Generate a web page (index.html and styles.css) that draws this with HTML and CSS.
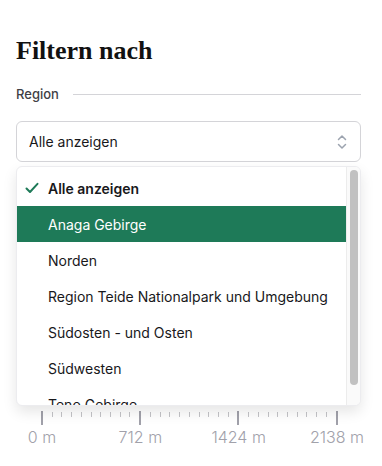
FILE: index.html
```html
<!DOCTYPE html>
<html lang="de">
<head>
<meta charset="utf-8">
<link rel="stylesheet" href="styles.css">
</head>
<body>
<div class="panel">
  <h2 class="title">Filtern nach</h2>
  <div class="section-head">
    <span class="section-label">Region</span>
    <span class="section-rule"></span>
  </div>
  <div class="select-wrap">
    <div class="select">
      <span class="select-value">Alle anzeigen</span>
      <svg class="select-icon" width="10" height="16" viewBox="0 0 10 16" fill="none" stroke="#9ca3af" stroke-width="1.5" stroke-linecap="round" stroke-linejoin="round"><path d="M1.5 5.5 5 2 8.5 5.5"/><path d="M1.5 10.5 5 14 8.5 10.5"/></svg>
    </div>
    <div class="dropdown">
      <ul class="options">
        <li class="option selected">
          <svg class="check" width="14" height="12" viewBox="0 0 14 12" fill="none" stroke="#1e7a58" stroke-width="2" stroke-linecap="round" stroke-linejoin="round"><path d="M1.5 6.5 5 10 12.5 1.8"/></svg>
          Alle anzeigen</li>
        <li class="option active">Anaga Gebirge</li>
        <li class="option">Norden</li>
        <li class="option">Region Teide Nationalpark und Umgebung</li>
        <li class="option">Südosten - und Osten</li>
        <li class="option">Südwesten</li>
        <li class="option">Teno Gebirge</li>
      </ul>
      <div class="scrollbar"><div class="thumb"></div></div>
    </div>
  </div>
  <div class="slider">
    <div class="ticks">
      <span class="tick major"></span><span class="tick"></span><span class="tick"></span><span class="tick"></span><span class="tick"></span><span class="tick"></span><span class="tick"></span><span class="tick"></span><span class="tick"></span><span class="tick"></span>
      <span class="tick major"></span><span class="tick"></span><span class="tick"></span><span class="tick"></span><span class="tick"></span><span class="tick"></span><span class="tick"></span><span class="tick"></span><span class="tick"></span><span class="tick"></span>
      <span class="tick major"></span><span class="tick"></span><span class="tick"></span><span class="tick"></span><span class="tick"></span><span class="tick"></span><span class="tick"></span><span class="tick"></span><span class="tick"></span><span class="tick"></span>
      <span class="tick major"></span>
    </div>
    <div class="labels">
      <span class="lbl"><span>0 m</span></span>
      <span class="lbl"><span>712 m</span></span>
      <span class="lbl"><span>1424 m</span></span>
      <span class="lbl"><span>2138 m</span></span>
    </div>
  </div>
</div>
</body>
</html>
```

FILE: styles.css
```css
* { box-sizing: border-box; }
html, body { margin: 0; padding: 0; background: #fff; }
body { font-family: Inter, "Noto Sans", sans-serif; color: #18181b; }
.panel { padding: 36px 21px 0 16px; }
.title {
  margin: 0;
  font-family: "Liberation Serif", serif;
  font-weight: 700;
  font-size: 26px;
  line-height: 30px;
  color: #111;
}
.section-head {
  display: flex;
  align-items: center;
  gap: 14px;
  margin-top: 18px;
  height: 20px;
}
.section-label { font-size: 13px; font-weight: 500; color: #3f3f46; }
.section-rule { flex: 1; height: 1px; background: #d4d4d8; }
.select-wrap { position: relative; margin-top: 17px; }
.select {
  height: 41px;
  border: 1px solid #d4d4d8;
  border-radius: 6px;
  display: flex;
  align-items: center;
  justify-content: space-between;
  padding: 0 13px 0 12px;
  font-size: 14px;
}
.select-icon { display: block; }
.dropdown {
  position: absolute;
  top: 45px;
  left: 0;
  right: 0;
  height: 240px;
  background: #fff;
  border: 1px solid #ececef;
  border-radius: 6px;
  box-shadow: 0 6px 14px rgba(0,0,0,0.10);
  overflow: hidden;
  display: flex;
  z-index: 2;
}
.options { list-style: none; margin: 0; padding: 3px 0 0; flex: 1; min-width: 0; }
.option {
  height: 36px;
  display: flex;
  align-items: center;
  padding-left: 31px;
  font-size: 14px;
  color: #18181b;
  white-space: nowrap;
  position: relative;
}
.option.selected { font-weight: 600; }
.option .check { position: absolute; left: 8px; top: 12px; }
.option.active { background: #1e7a58; color: #fff; }
.scrollbar {
  width: 14px;
  border-left: 1px solid #ececec;
  background: #fafafa;
  padding: 3px 2px 0 3px;
}
.thumb { height: 215px; background: #c1c1c1; border-radius: 4px; }
.slider { margin-top: 249px; padding: 0 0 0 25px; }
.ticks {
  width: 297px;
  display: flex;
  justify-content: space-between;
  align-items: flex-start;
  height: 15px;
}
.tick { width: 1px; height: 5px; margin-top: 1px; background: #c4c4c8; }
.tick.major { width: 2px; height: 14px; margin-top: 0; background: #a1a1aa; }
.labels {
  width: 297px;
  display: flex;
  justify-content: space-between;
  margin-top: 1px;
}
.lbl { width: 2px; display: flex; justify-content: center; }
.lbl span { white-space: nowrap; font-size: 16px; font-weight: 300; color: #a1a1aa; }
```
